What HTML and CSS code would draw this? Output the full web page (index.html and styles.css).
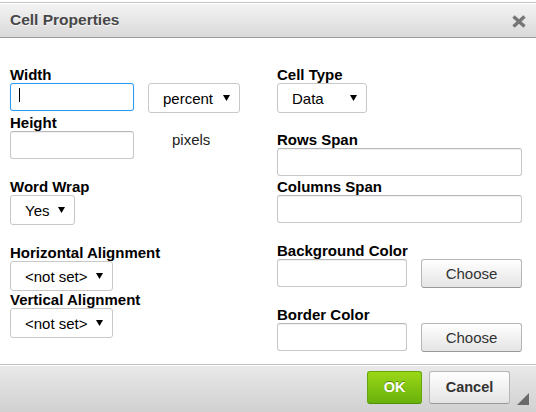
FILE: index.html
```html
<!DOCTYPE html>
<html>
<head>
<meta charset="utf-8">
<title>Cell Properties</title>
<link rel="stylesheet" href="styles.css">
</head>
<body>
<div class="dialog">
  <div class="title">
    <span class="title-text">Cell Properties</span>
    <svg class="close" width="14" height="13" viewBox="0 0 14 13"><path d="M1.5 1.5 L12.5 11.5 M12.5 1.5 L1.5 11.5" stroke="#767676" stroke-width="3.4" stroke-linecap="butt"/></svg>
  </div>
  <div class="content">
    <div class="col col-left">
      <div class="field">
        <div class="label">Width</div>
        <div class="row">
          <div class="input input-short focused"><span class="caret"></span></div>
          <div class="select sel-percent"><span>percent</span><svg class="arrow" width="7" height="6" viewBox="0 0 7 6"><polygon points="0,0 7,0 3.5,6" fill="#000"/></svg></div>
        </div>
      </div>
      <div class="field field-height">
        <div class="label">Height</div>
        <div class="row">
          <div class="input input-short"></div>
          <span class="unit">pixels</span>
        </div>
      </div>
      <div class="field field-wrap">
        <div class="label">Word Wrap</div>
        <div class="select sel-yes"><span>Yes</span><svg class="arrow" width="7" height="6" viewBox="0 0 7 6"><polygon points="0,0 7,0 3.5,6" fill="#000"/></svg></div>
      </div>
      <div class="field field-halign">
        <div class="label">Horizontal Alignment</div>
        <div class="select sel-notset"><span>&lt;not set&gt;</span><svg class="arrow" width="7" height="6" viewBox="0 0 7 6"><polygon points="0,0 7,0 3.5,6" fill="#000"/></svg></div>
      </div>
      <div class="field">
        <div class="label">Vertical Alignment</div>
        <div class="select sel-notset"><span>&lt;not set&gt;</span><svg class="arrow" width="7" height="6" viewBox="0 0 7 6"><polygon points="0,0 7,0 3.5,6" fill="#000"/></svg></div>
      </div>
    </div>
    <div class="col col-right">
      <div class="field">
        <div class="label">Cell Type</div>
        <div class="select sel-data"><span>Data</span><svg class="arrow" width="7" height="6" viewBox="0 0 7 6"><polygon points="0,0 7,0 3.5,6" fill="#000"/></svg></div>
      </div>
      <div class="field field-rows">
        <div class="label">Rows Span</div>
        <div class="input input-full"></div>
      </div>
      <div class="field field-cols">
        <div class="label">Columns Span</div>
        <div class="input input-full"></div>
      </div>
      <div class="field field-bg">
        <div class="label">Background Color</div>
        <div class="row row-color">
          <div class="input input-color"></div>
          <div class="btn btn-choose">Choose</div>
        </div>
      </div>
      <div class="field field-border">
        <div class="label">Border Color</div>
        <div class="row row-color">
          <div class="input input-color"></div>
          <div class="btn btn-choose">Choose</div>
        </div>
      </div>
    </div>
  </div>
  <div class="footer">
    <div class="btn btn-ok">OK</div>
    <div class="btn btn-cancel">Cancel</div>
    <svg class="resize" width="12" height="12" viewBox="0 0 12 12"><polygon points="12,0 12,12 0,12" fill="#6a6a6a"/></svg>
  </div>
</div>
</body>
</html>
```
FILE: styles.css
```css
* { box-sizing: border-box; }
html, body { margin: 0; padding: 0; background: #fff; }
body { font-family: "Liberation Sans", Arial, sans-serif; font-size: 15px; color: #000; }

.dialog {
  width: 536px;
  height: 412px;
  display: flex;
  flex-direction: column;
  overflow: hidden;
}

.title {
  margin-top: 2px;
  height: 36px;
  border-top: 1px solid #c4c4c4;
  border-bottom: 1px solid #9a9a9a;
  background: linear-gradient(#f4f4f4, #d8d9d8);
  box-shadow: inset 0 1px 0 #fff;
  padding: 0 10px 0 10px;
  display: flex;
  align-items: center;
  justify-content: space-between;
}
.title-text {
  font-size: 15.5px;
  font-weight: bold;
  color: #474747;
  line-height: 18px;
  text-shadow: 0 1px 0 rgba(255,255,255,.75);
}
.close { display: block; margin-top: 3px; }

.content {
  flex: 1;
  display: flex;
  padding: 28px 0 0 10px;
}
.col { display: flex; flex-direction: column; }
.col-left { width: 267px; }
.col-right { width: 245px; }

.label {
  font-weight: bold;
  line-height: 17px;
  height: 17px;
  color: #000;
  white-space: nowrap;
}
.field-height { margin-top: 1px; }
.field-wrap { margin-top: 19px; }
.field-halign { margin-top: 19px; }
.field-rows { margin-top: 18px; }
.field-cols { margin-top: 2px; }
.field-bg { margin-top: 19px; }
.field-border { margin-top: 18px; }

.row { display: flex; align-items: flex-start; }

.input {
  height: 28px;
  border: 1px solid #c5c8cb;
  border-top-color: #b4b8bd;
  border-radius: 3px;
  background: #fff;
  box-shadow: inset 0 1px 1px rgba(0,0,0,.06);
}
.input-short { width: 124px; }
.input-full { width: 245px; }
.input-color { width: 130px; }
.focused {
  border-color: #2d9cf0;
  box-shadow: 0 0 1px rgba(45,156,240,.5);
  padding: 4px 0 0 8px;
}
.caret {
  display: block;
  width: 1px;
  height: 14px;
  background: #000;
}

.select {
  height: 30px;
  border: 1px solid #c8c8c8;
  border-radius: 3px;
  background: #fff;
  display: flex;
  align-items: center;
  justify-content: space-between;
  padding: 0 9px 0 14px;
  line-height: 17px;
  color: #000;
  white-space: nowrap;
}
.arrow { display: block; }
.sel-percent { width: 92px; margin-left: 14px; }
.sel-yes { width: 65px; }
.sel-notset { width: 103px; }
.sel-data { width: 90px; }

.unit {
  margin-left: 38px;
  line-height: 17px;
  color: #222;
}

.row-color { justify-content: space-between; }

.btn {
  display: flex;
  align-items: center;
  justify-content: center;
  border: 1px solid #b6b6b6;
  border-bottom-color: #999;
  border-radius: 3px;
  background: linear-gradient(#ffffff, #e4e4e4);
  color: #333;
  line-height: 17px;
}
.btn-choose { width: 101px; height: 29px; }

.footer {
  height: 48px;
  border-top: 1px solid #bfbfbf;
  background: linear-gradient(#e9e9e9, #d0d1d0);
  box-shadow: inset 0 1px 0 #fff;
  display: flex;
  justify-content: flex-end;
  align-items: flex-start;
  padding: 6px 26px 0 0;
  gap: 7px;
  position: relative;
}
.btn-ok {
  width: 55px;
  height: 33px;
  font-weight: bold;
  font-size: 14.5px;
  color: #fff;
  border-color: #62a60a #62a60a #4d9200;
  background: linear-gradient(#9ad717, #69b10b);
  text-shadow: 0 -1px 0 #55830c;
}
.btn-cancel {
  width: 81px;
  height: 33px;
  font-weight: bold;
  font-size: 14.5px;
  color: #333;
}
.resize {
  position: absolute;
  right: 7px;
  bottom: 7px;
  display: block;
}
```
